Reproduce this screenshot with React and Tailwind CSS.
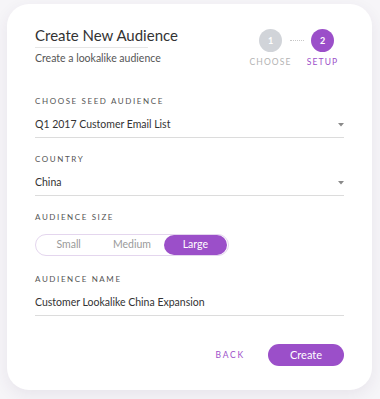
const font = { fontFamily: 'Lato, "Noto Sans", sans-serif' };

function Caret() {
  return (
    <svg width="6" height="4" viewBox="0 0 6 4" className="mt-[2px]">
      <path d="M0 0h6L3 3.5z" fill="#8a8a8a" />
    </svg>
  );
}

function Label({ children }) {
  return (
    <div className="text-[8px] leading-[10px] tracking-[1.6px] uppercase text-[#555]">{children}</div>
  );
}

function SelectField({ label, value, className = '' }) {
  return (
    <div className={className}>
      <Label>{label}</Label>
      <div className="mt-[10px] flex items-center justify-between border-b border-[#dcdcdc] pb-[5px]">
        <span className="text-[10.5px] leading-[16px] text-[#333]">{value}</span>
        <Caret />
      </div>
    </div>
  );
}

function Step({ n, label, active }) {
  return (
    <div className="flex w-[23px] flex-col items-center">
      <div
        className={`flex h-[23px] w-[23px] items-center justify-center rounded-full text-[9px] font-bold text-white ${
          active ? 'bg-[#9b4fc9]' : 'bg-[#d1d4d9]'
        }`}
      >
        {n}
      </div>
      <div
        className={`mt-[5px] whitespace-nowrap text-[8.5px] leading-[10px] tracking-[1.1px] ${
          active ? 'text-[#9b4fc9]' : 'text-[#b3b3b3]'
        }`}
      >
        {label}
      </div>
    </div>
  );
}

export default function App() {
  const sizes = ['Small', 'Medium', 'Large'];
  const selected = 'Large';

  return (
    <div className="h-[399px] w-[380px] overflow-hidden bg-[#f6f5f8] pl-[7px] pt-[4px]" style={font}>
      <div className="h-[386px] w-[365px] rounded-[22px] bg-white px-[28px] pt-[21px] shadow-[0_5px_16px_rgba(60,40,90,0.08)]">
        <div className="flex items-start justify-between">
          <div>
            <div className="text-[15px] leading-[20px] text-[#333]">Create New Audience</div>
            <div className="mt-[2px] h-px w-[113px] bg-[#e6e6e6]" />
            <div className="mt-[3px] text-[10.5px] leading-[14px] text-[#555]">Create a lookalike audience</div>
          </div>
          <div className="mr-[10px] mt-[4px] flex items-start">
            <Step n="1" label="CHOOSE" />
            <div className="flex h-[23px] w-[29px] items-center justify-center">
              <div className="w-[14px] border-t border-dotted border-[#c8c8c8]" />
            </div>
            <Step n="2" label="SETUP" active />
          </div>
        </div>

        <SelectField className="mt-[29px]" label="Choose seed audience" value="Q1 2017 Customer Email List" />
        <SelectField className="mt-[16px]" label="Country" value="China" />

        <div className="mt-[16px]">
          <Label>Audience size</Label>
          <div className="mt-[12px] flex h-[22px] w-[194px] items-center rounded-full border border-[#e4d6ee] p-[1px]">
            {sizes.map((s) => (
              <div
                key={s}
                className={`flex h-[20px] flex-1 items-center justify-center rounded-full text-[10.5px] ${
                  s === selected ? 'bg-[#9b4fc9] text-white' : 'text-[#9a9a9a]'
                }`}
              >
                {s}
              </div>
            ))}
          </div>
        </div>

        <div className="mt-[18px]">
          <Label>Audience name</Label>
          <div className="mt-[10px] border-b border-[#dcdcdc] pb-[5px] text-[10.5px] leading-[16px] text-[#333]">
            Customer Lookalike China Expansion
          </div>
        </div>

        <div className="mt-[28px] flex items-center justify-end">
          <button type="button" className="mr-[23px] text-[8.5px] tracking-[1.8px] text-[#9b4fc9]">
            BACK
          </button>
          <button
            type="button"
            className="h-[22px] w-[76px] rounded-full bg-[#9b4fc9] text-[11px] text-white"
          >
            Create
          </button>
        </div>
      </div>
    </div>
  );
}
